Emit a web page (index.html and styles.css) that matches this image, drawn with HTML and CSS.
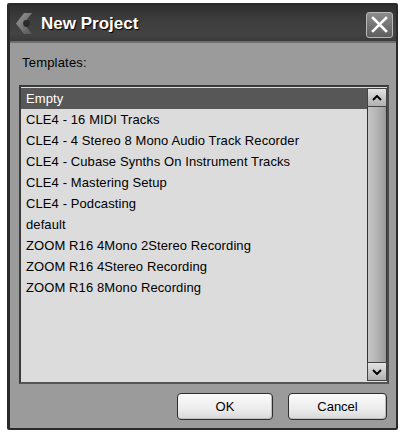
FILE: index.html
```html
<!DOCTYPE html>
<html>
<head>
<meta charset="utf-8">
<link rel="stylesheet" href="styles.css">
</head>
<body>
<div class="window">
  <div class="titlebar">
    <svg class="logo" width="18" height="21" viewBox="0 0 18 21">
      <defs>
        <linearGradient id="lg" x1="0" y1="0" x2="1" y2="1">
          <stop offset="0" stop-color="#9a9a9a"/>
          <stop offset="1" stop-color="#555"/>
        </linearGradient>
      </defs>
      <polygon points="9,0 17,0 9,10.5 17,21 9,21 1,10.5" fill="url(#lg)"/>
      <circle cx="11.5" cy="10.5" r="3.4" fill="#2a2a2a"/>
    </svg>
    <span class="title">New Project</span>
    <div class="close">
      <svg width="17" height="17" viewBox="0 0 17 17"><path d="M2 2 L15 15 M15 2 L2 15" stroke="#fff" stroke-width="2.6" stroke-linecap="square"/></svg>
    </div>
  </div>
  <div class="body">
    <div class="label">Templates:</div>
    <div class="list">
      <div class="items">
        <div class="row sel">Empty</div>
        <div class="row">CLE4 - 16 MIDI Tracks</div>
        <div class="row">CLE4 - 4 Stereo 8 Mono Audio Track Recorder</div>
        <div class="row">CLE4 - Cubase Synths On Instrument Tracks</div>
        <div class="row">CLE4 - Mastering Setup</div>
        <div class="row">CLE4 - Podcasting</div>
        <div class="row">default</div>
        <div class="row">ZOOM R16 4Mono 2Stereo Recording</div>
        <div class="row">ZOOM R16 4Stereo Recording</div>
        <div class="row">ZOOM R16 8Mono Recording</div>
      </div>
      <div class="scroll">
        <div class="sbtn"><svg width="10" height="6" viewBox="0 0 10 6"><path d="M1 5 L5 1 L9 5" stroke="#000" stroke-width="2" fill="none"/></svg></div>
        <div class="track"></div>
        <div class="sbtn"><svg width="10" height="6" viewBox="0 0 10 6"><path d="M1 1 L5 5 L9 1" stroke="#000" stroke-width="2" fill="none"/></svg></div>
      </div>
    </div>
    <div class="buttons">
      <div class="btn ok">OK</div>
      <div class="btn cancel">Cancel</div>
    </div>
  </div>
</div>
</body>
</html>
```
FILE: styles.css
```css
html, body {
  margin: 0;
  padding: 0;
  background: #fff;
}
body {
  font-family: "Liberation Sans", Arial, sans-serif;
}
.window {
  box-sizing: border-box;
  width: 391px;
  height: 427px;
  margin: 3px 0 0 7px;
  border: 2px solid #2a2a2a;
  border-left-width: 3px;
  border-radius: 2px;
  background: #9b9b9b;
  display: flex;
  flex-direction: column;
}
.titlebar {
  height: 36px;
  flex: none;
  display: flex;
  align-items: center;
  padding: 0 3px 0 5px;
  background: linear-gradient(#2f2f2f, #3d3d3d 40%, #434343 80%, #3a3a3a);
  border-bottom: 2px solid #6e6e6e;
}
.logo {
  flex: none;
  margin-right: 8px;
  margin-top: 1px;
}
.title {
  color: #fff;
  font-weight: bold;
  font-size: 17px;
  text-shadow: 1px 1px 1px #000;
  flex: 1;
  margin-top: 2px;
}
.close {
  box-sizing: border-box;
  width: 27px;
  height: 26px;
  border: 1px solid #b8b8b8;
  border-radius: 3px;
  background: linear-gradient(#8c8c8c, #5e5e5e);
  display: flex;
  align-items: center;
  justify-content: center;
  margin-top: 3px;
}
.body {
  flex: 1;
  display: flex;
  flex-direction: column;
  padding: 12px 7px 9px 9px;
}
.label {
  font-size: 13px;
  line-height: 16px;
  color: #000;
  padding-left: 3px;
  margin-bottom: 14px;
  letter-spacing: 0.2px;
}
.list {
  box-sizing: border-box;
  height: 299px;
  border: 2px solid #3a3a3a;
  border-right-color: #4a4a4a;
  border-bottom-color: #555;
  background: #dcdcdc;
  display: flex;
}
.items {
  flex: 1;
  padding-top: 1px;
}
.row {
  height: 21px;
  line-height: 21px;
  font-size: 13px;
  color: #000;
  padding-left: 5px;
  white-space: nowrap;
  letter-spacing: 0.1px;
}
.row.sel {
  background: #575757;
  color: #fff;
}
.scroll {
  width: 20px;
  display: flex;
  flex-direction: column;
  padding: 1px 0;
  box-sizing: border-box;
}
.sbtn {
  box-sizing: border-box;
  height: 19px;
  border: 1px solid #444;
  background: linear-gradient(#e4e4e4, #c4c4c4 60%, #b0b0b0);
  display: flex;
  align-items: center;
  justify-content: center;
}
.track {
  flex: 1;
  background: linear-gradient(to right, #333 0 1px, #c4c4c4 1px, #b8b8b8 40%, #a4a4a4 80%, #969696 calc(100% - 1px), #333 calc(100% - 1px));
}
.buttons {
  margin-top: 9px;
  display: flex;
  justify-content: flex-end;
  gap: 15px;
  padding-right: 2px;
}
.btn {
  box-sizing: border-box;
  height: 27px;
  border: 1px solid #2e2e2e;
  border-radius: 4px;
  background: linear-gradient(#fafafa, #ececec 60%, #d8d8d8);
  box-shadow: inset -1px -1px 0 #bdbdbd;
  font-size: 13px;
  line-height: 25px;
  text-align: center;
  color: #000;
}
.ok { width: 96px; }
.cancel { width: 99px; }
```
